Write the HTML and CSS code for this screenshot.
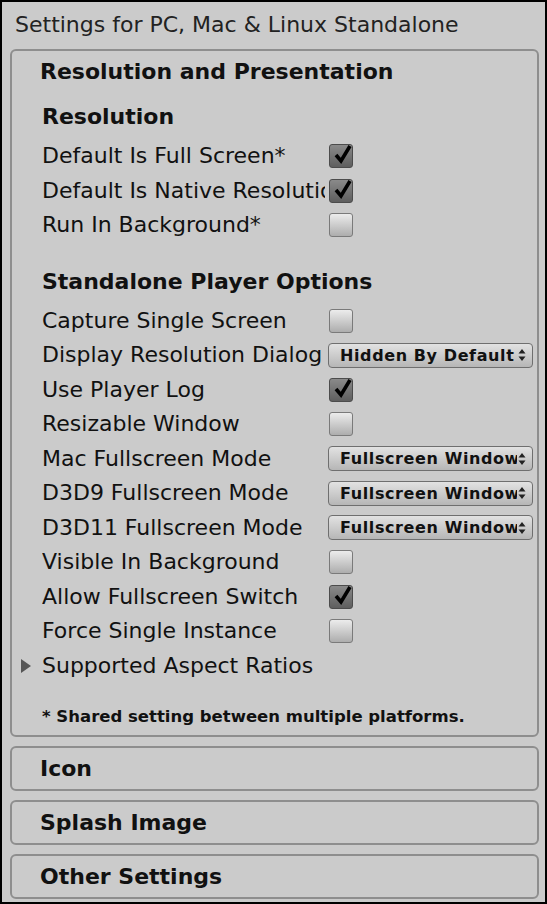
FILE: index.html
```html
<!DOCTYPE html>
<html>
<head>
<meta charset="utf-8">
<link rel="stylesheet" href="styles.css">
</head>
<body>
<div class="frame">
  <div class="title">Settings for PC, Mac &amp; Linux Standalone</div>
  <div class="box main">
    <div class="box-head">Resolution and Presentation</div>
    <div class="sub first">Resolution</div>
    <div class="row"><span class="label">Default Is Full Screen*</span><span class="cb on"><svg viewBox="0 0 24 24"><path d="M6 12 L11 18 L20 3"/></svg></span></div>
    <div class="row"><span class="label">Default Is Native Resolution</span><span class="cb on"><svg viewBox="0 0 24 24"><path d="M6 12 L11 18 L20 3"/></svg></span></div>
    <div class="row"><span class="label">Run In Background*</span><span class="cb"></span></div>
    <div class="sub second">Standalone Player Options</div>
    <div class="row"><span class="label">Capture Single Screen</span><span class="cb"></span></div>
    <div class="row"><span class="label">Display Resolution Dialog</span><span class="dd"><span class="dd-text">Hidden By Default</span><svg class="arr" viewBox="0 0 8 14"><path d="M4 1 L7.5 5.5 H0.5 Z M4 13 L7.5 8.5 H0.5 Z"/></svg></span></div>
    <div class="row"><span class="label">Use Player Log</span><span class="cb on"><svg viewBox="0 0 24 24"><path d="M6 12 L11 18 L20 3"/></svg></span></div>
    <div class="row"><span class="label">Resizable Window</span><span class="cb"></span></div>
    <div class="row"><span class="label">Mac Fullscreen Mode</span><span class="dd"><span class="dd-text">Fullscreen Window</span><svg class="arr" viewBox="0 0 8 14"><path d="M4 1 L7.5 5.5 H0.5 Z M4 13 L7.5 8.5 H0.5 Z"/></svg></span></div>
    <div class="row"><span class="label">D3D9 Fullscreen Mode</span><span class="dd"><span class="dd-text">Fullscreen Window</span><svg class="arr" viewBox="0 0 8 14"><path d="M4 1 L7.5 5.5 H0.5 Z M4 13 L7.5 8.5 H0.5 Z"/></svg></span></div>
    <div class="row"><span class="label">D3D11 Fullscreen Mode</span><span class="dd"><span class="dd-text">Fullscreen Window</span><svg class="arr" viewBox="0 0 8 14"><path d="M4 1 L7.5 5.5 H0.5 Z M4 13 L7.5 8.5 H0.5 Z"/></svg></span></div>
    <div class="row"><span class="label">Visible In Background</span><span class="cb"></span></div>
    <div class="row"><span class="label">Allow Fullscreen Switch</span><span class="cb on"><svg viewBox="0 0 24 24"><path d="M6 12 L11 18 L20 3"/></svg></span></div>
    <div class="row"><span class="label">Force Single Instance</span><span class="cb"></span></div>
    <div class="row fold"><svg class="tri" viewBox="0 0 10 14"><path d="M0 0 L10 7 L0 14 Z"/></svg><span class="label">Supported Aspect Ratios</span></div>
    <div class="note">* Shared setting between multiple platforms.</div>
  </div>
  <div class="box collapsed">Icon</div>
  <div class="box collapsed">Splash Image</div>
  <div class="box collapsed">Other Settings</div>
</div>
</body>
</html>
```
FILE: styles.css
```css
* { box-sizing: border-box; }
html, body { margin: 0; padding: 0; background: #cbcbcb; }
body { font-family: "DejaVu Sans", Verdana, sans-serif; color: #111; }
.frame {
  width: 547px;
  height: 904px;
  border: 2px solid #000;
  background: #cbcbcb;
  overflow: hidden;
}
.title {
  height: 47px;
  line-height: 46px;
  padding-left: 13px;
  font-size: 22px;
  color: #222;
  white-space: nowrap;
}
.box {
  margin: 0 6px 0 8px;
  border: 2px solid #8e8e8e;
  border-radius: 6px;
}
.main { padding: 0 0 4px 0; }
.box-head {
  height: 42px;
  line-height: 42px;
  padding-left: 28px;
  font-size: 22px;
  font-weight: bold;
}
.sub {
  font-size: 22px;
  font-weight: bold;
  line-height: 34px;
  padding-left: 30px;
}
.sub.first { padding-top: 7px; padding-bottom: 5px; }
.sub.second { padding-top: 22px; padding-bottom: 5px; }
.row {
  display: flex;
  align-items: center;
  height: 34.5px;
  padding-left: 30px;
}
.label {
  width: 283px;
  flex: none;
  overflow: hidden;
  white-space: nowrap;
  font-size: 22px;
  line-height: 30px;
}
.fold { padding-left: 9px; }
.fold .label { width: auto; }
.tri { width: 10px; height: 14px; margin-right: 11px; fill: #555; flex: none; }
.cb {
  flex: none;
  width: 24px;
  height: 24px;
  margin-left: 4px;
  border: 1px solid #7a7a7a;
  border-radius: 3px;
  background: linear-gradient(#ececec, #adadad);
  position: relative;
}
.cb.on {
  background: linear-gradient(#8a8a8a, #5e5e5e);
  border-color: #4c4c4c;
}
.cb svg {
  position: absolute;
  left: 0;
  top: -2px;
  width: 24px;
  height: 24px;
  overflow: visible;
}
.cb svg path { fill: none; stroke: #000; stroke-width: 3.6; stroke-linejoin: miter; }
.dd {
  flex: none;
  display: flex;
  align-items: center;
  width: 205px;
  height: 25px;
  margin-left: 3px;
  padding: 0 6px 0 11px;
  border: 1px solid #6f6f6f;
  border-radius: 4px;
  background: linear-gradient(#e2e2e2, #b6b6b6);
}
.dd-text {
  flex: 1;
  overflow: hidden;
  white-space: nowrap;
  font-size: 16px;
  font-weight: bold;
  letter-spacing: 0.6px;
  color: #111;
}
.arr { width: 8px; height: 14px; flex: none; fill: #222; margin-left: 1px; }
.note {
  padding: 20px 0 0 30px;
  font-size: 16.5px;
  font-weight: bold;
  line-height: 28px;
  white-space: nowrap;
}
.collapsed {
  margin-top: 9px;
  height: 45px;
  line-height: 41px;
  padding-left: 28px;
  font-size: 22px;
  font-weight: bold;
}
```
